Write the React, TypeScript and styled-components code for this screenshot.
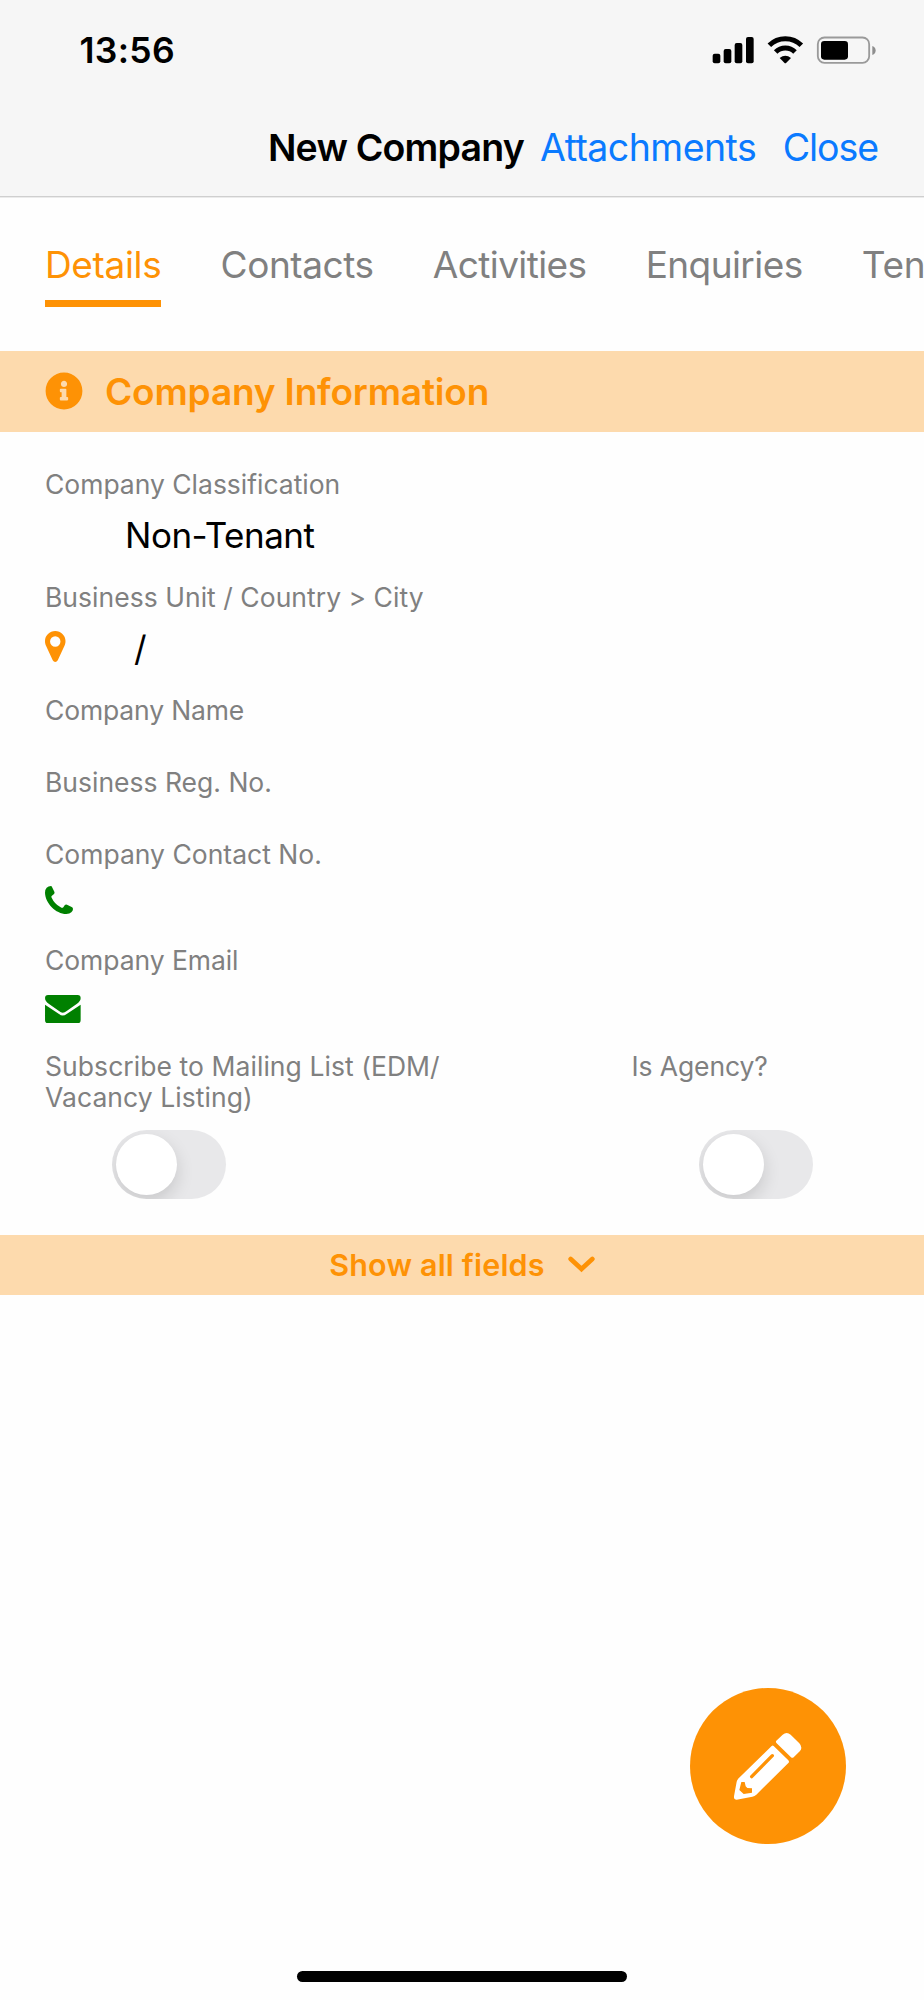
import React from 'react';
import styled, { createGlobalStyle } from 'styled-components';
import { FaInfoCircle } from 'react-icons/fa';

const orange = '#fe9205';
const band = '#fddaad';
const grey = '#808080';

const GlobalStyle = createGlobalStyle`
  * { box-sizing: border-box; }
  body { margin: 0; background: #fefefe; }
  svg { display: block; flex: none; }
`;

const Screen = styled.div`
  position: relative;
  display: flex;
  flex-direction: column;
  width: 924px;
  height: 2000px;
  overflow: hidden;
  background: #fefefe;
  font-family: Inter, 'Liberation Sans', sans-serif;
`;

const Header = styled.header`
  flex: none;
  height: 197px;
  background: #f6f6f6;
  border-bottom: 1px solid #cfcfcf;
  box-shadow: 0 1px 0 #ebebeb;
`;

const StatusBar = styled.div`
  display: flex;
  align-items: center;
  justify-content: space-between;
  height: 99px;
  padding: 2px 44px 0 79.5px;
`;

const Time = styled.span`
  padding-top: 1px;
  font-size: 35.5px;
  font-weight: 600;
  line-height: 44px;
  letter-spacing: 0.3px;
`;

const NavBar = styled.nav`
  display: flex;
  align-items: center;
  justify-content: flex-end;
  height: 97px;
  padding-right: 46px;
  font-size: 37.5px;
  line-height: 46px;
`;

const Title = styled.h1`
  margin: 0 16px 0 0;
  font-size: inherit;
  font-weight: 600;
  letter-spacing: -0.8px;
`;

const NavLink = styled.span<{ $tracking: number }>`
  color: #0a7aff;
  letter-spacing: ${(p) => p.$tracking}px;
  & + & { margin-left: 26.5px; }
`;

const Tabs = styled.div`
  display: flex;
  flex: none;
  align-items: flex-start;
  gap: 59.2px;
  height: 154px;
  padding: 44.5px 0 0 45px;
  overflow: hidden;
`;

const Tab = styled.div<{ $active?: boolean; $tracking: number }>`
  flex: none;
  padding-bottom: 12.5px;
  border-bottom: 7px solid ${(p) => (p.$active ? orange : 'transparent')};
  color: ${(p) => (p.$active ? orange : grey)};
  font-size: 37px;
  line-height: 46px;
  letter-spacing: ${(p) => p.$tracking}px;
  white-space: nowrap;
`;

const SectionHeading = styled.div`
  display: flex;
  flex: none;
  align-items: center;
  gap: 22.5px;
  height: 81px;
  padding-left: 44.5px;
  background: ${band};
  color: ${orange};
  font-size: 37px;
  font-weight: 600;
  letter-spacing: -0.17px;
  svg { margin-bottom: 2px; }
`;

const Form = styled.div`
  display: flex;
  flex: none;
  flex-direction: column;
  height: 803px;
  padding: 36.5px 45px 0;
`;

const Field = styled.div<{ $height: number }>`
  flex: none;
  height: ${(p) => p.$height}px;
`;

const Label = styled.div<{ $tracking?: number }>`
  color: ${grey};
  font-size: 26.5px;
  line-height: 31.7px;
  letter-spacing: ${(p) => p.$tracking ?? 0}px;
  white-space: pre-line;
`;

const ValueRow = styled.div<{ $height: number }>`
  display: flex;
  align-items: center;
  height: ${(p) => p.$height}px;
  margin-top: 12px;
`;

const Value = styled.span<{ $indent: number }>`
  margin-left: ${(p) => p.$indent}px;
  font-size: 35px;
  line-height: 46px;
  letter-spacing: -0.48px;
`;

const ToggleRow = styled.div`
  display: grid;
  grid-template-columns: 586.5px 1fr;
`;

const ToggleField = styled.div`
  display: flex;
  flex-direction: column;
  justify-content: space-between;
  height: 148px;
`;

const Track = styled.div`
  width: 114px;
  height: 69px;
  margin-left: 67px;
  padding: 4px;
  overflow: hidden;
  border-radius: 35px;
  background: #e8e8ea;
`;

const Knob = styled.div`
  width: 61px;
  height: 61px;
  border-radius: 50%;
  background: #fff;
  box-shadow: 0 7px 18px rgba(0, 0, 0, 0.14);
`;

const ShowAll = styled.div`
  display: flex;
  flex: none;
  align-items: center;
  justify-content: center;
  gap: 23px;
  height: 60px;
  padding-bottom: 1.5px;
  background: ${band};
  color: ${orange};
  font-size: 30.5px;
  font-weight: 600;
  letter-spacing: 0.17px;
`;

const Fab = styled.div`
  position: absolute;
  right: 78px;
  bottom: 156px;
  display: flex;
  align-items: center;
  justify-content: center;
  width: 156px;
  height: 156px;
  padding: 0 0 2px 4px;
  border-radius: 50%;
  background: ${orange};
`;

const HomeIndicator = styled.div`
  width: 330px;
  height: 11px;
  margin: auto auto 18px;
  border-radius: 6px;
  background: #000;
`;

const StatusIcons = () => (
  <svg width="170" height="33" viewBox="744 102 510 99">
    <rect x="752" y="161" width="23" height="29" rx="6" />
    <rect x="785" y="147" width="23" height="43" rx="6" />
    <rect x="818" y="129" width="23" height="61" rx="6" />
    <rect x="852" y="111" width="23" height="79" rx="6" />
    <g fill="none" stroke="#000" strokeWidth="15">
      <path d="M922 136A68 68 0 0 1 1018 136" />
      <path d="M941 156A41 41 0 0 1 999 156" />
    </g>
    <path d="M953 174Q970 160 987 174L973 188Q970 191 967 188Z" />
    <rect x="1067.5" y="112.500" width="154" height="76" rx="20" fill="none" stroke="#9a9a9a" strokeWidth="5.500" />
    <rect x="1077" y="123" width="81" height="56" rx="10" />
    <path d="M1231 138Q1241 142 1241 151.500T1231 165Z" fill="#8e8e8e" />
  </svg>
);

const PinIcon = styled(({ className }: { className?: string }) => (
  <svg className={className} width="20.500" height="31" viewBox="0 0 61 92">
    <path
      fill={orange}
      fillRule="evenodd"
      d="M30.500 0C47 0 61 13 61 30C61 36 60 40 58 44L38 87Q35 92 30.500 92T23 87L3 44C1 40 0 36 0 30C0 13 14 0 30.500 0ZM30.500 15.500a15.500 15.500 0 1 0 0 31a15.500 15.500 0 0 0 0-31Z"
    />
  </svg>
))`
  margin-bottom: 4px;
`;

const PhoneIcon = () => (
  <svg width="28" height="28" viewBox="0 0 84 84">
    <path
      fill="#008000"
      d="M5 5Q10 0 18 0Q20 0 21 3L28 17Q30 21 27 24L20 30Q18 32 20 35Q28 53 47 64Q52 67 55 64L59 58Q62 54 66 56L80 63Q84 65 84 69Q84 74 79 79Q74 84 64 84C32 83 1 52 0 20Q0 10 5 5Z"
    />
  </svg>
);

const MailIcon = () => (
  <svg width="35.700" height="28.300" viewBox="0 0 107 85">
    <g fill="#008000">
      <path d="M9 0H98Q107 0 107 9C107 16 103 21 96 26L65 48Q53 58 42 48L11 26C4 21 0 16 0 9Q0 0 9 0Z" />
      <path d="M0 29L42 57Q53 66 65 57L107 29V76Q107 85 98 85H9Q0 85 0 76Z" />
    </g>
  </svg>
);

const ChevronIcon = () => (
  <svg width="27" height="17" viewBox="0 0 81 51">
    <path
      d="M8 9L40.500 39L73 9"
      fill="none"
      stroke={orange}
      strokeWidth="14"
      strokeLinecap="round"
    />
  </svg>
);

const PencilIcon = () => (
  <svg width="80" height="80" viewBox="0 0 240 240">
    <path
      fill="#fff"
      d="M139 47L158 29Q170 19 182 29L208 55Q219 67 210 78L191 97Q187 100 183 97L140 55Q136 51 139 47ZM125 63Q128 60 131 63L175 106Q179 110 175 114L79 209Q74 214 67 215L20 224Q11 224 12 214L20 170Q21 165 26 160Z"
    />
    <path d="M65 155L127 92" stroke={orange} strokeWidth="10" strokeLinecap="round" />
    <path fill={orange} d="M34 171H44L47 184L52 189L66 190V203L41 207L28 195Z" />
  </svg>
);

const Toggle = ({ label, tracking }: { label: string; tracking?: number }) => (
  <ToggleField>
    <Label $tracking={tracking}>{label}</Label>
    <Track>
      <Knob />
    </Track>
  </ToggleField>
);

export default function App() {
  return (
    <Screen>
      <GlobalStyle />
      <Header>
        <StatusBar>
          <Time>13:56</Time>
          <StatusIcons />
        </StatusBar>
        <NavBar>
          <Title>New Company</Title>
          <NavLink $tracking={-0.55}>Attachments</NavLink>
          <NavLink $tracking={-1.06}>Close</NavLink>
        </NavBar>
      </Header>
      <Tabs>
        <Tab $active $tracking={-0.35}>Details</Tab>
        <Tab $tracking={-0.43}>Contacts</Tab>
        <Tab $tracking={-0.6}>Activities</Tab>
        <Tab $tracking={-0.58}>Enquiries</Tab>
        <Tab $tracking={-0.3}>Tenants</Tab>
      </Tabs>
      <SectionHeading>
        <FaInfoCircle size={38} />
        <span>Company Information</span>
      </SectionHeading>
      <Form>
        <Field $height={113}>
          <Label $tracking={-0.02}>Company Classification</Label>
          <ValueRow $height={46}>
            <Value $indent={80}>Non-Tenant</Value>
          </ValueRow>
        </Field>
        <Field $height={113.3}>
          <Label $tracking={0.03}>Business Unit / Country &gt; City</Label>
          <ValueRow $height={46}>
            <PinIcon />
            <Value $indent={68.5}>/</Value>
          </ValueRow>
        </Field>
        <Field $height={72.3}>
          <Label $tracking={-0.15}>Company Name</Label>
        </Field>
        <Field $height={72.3}>
          <Label>Business Reg. No.</Label>
        </Field>
        <Field $height={105.5}>
          <Label>Company Contact No.</Label>
          <ValueRow $height={34}>
            <PhoneIcon />
          </ValueRow>
        </Field>
        <Field $height={105.8}>
          <Label $tracking={-0.07}>Company Email</Label>
          <ValueRow $height={41}>
            <MailIcon />
          </ValueRow>
        </Field>
        <ToggleRow>
          <Toggle label={'Subscribe to Mailing List (EDM/\nVacancy Listing)'} tracking={0.06} />
          <Toggle label="Is Agency?" tracking={-0.1} />
        </ToggleRow>
      </Form>
      <ShowAll>
        <span>Show all fields</span>
        <ChevronIcon />
      </ShowAll>
      <HomeIndicator />
      <Fab>
        <PencilIcon />
      </Fab>
    </Screen>
  );
}
